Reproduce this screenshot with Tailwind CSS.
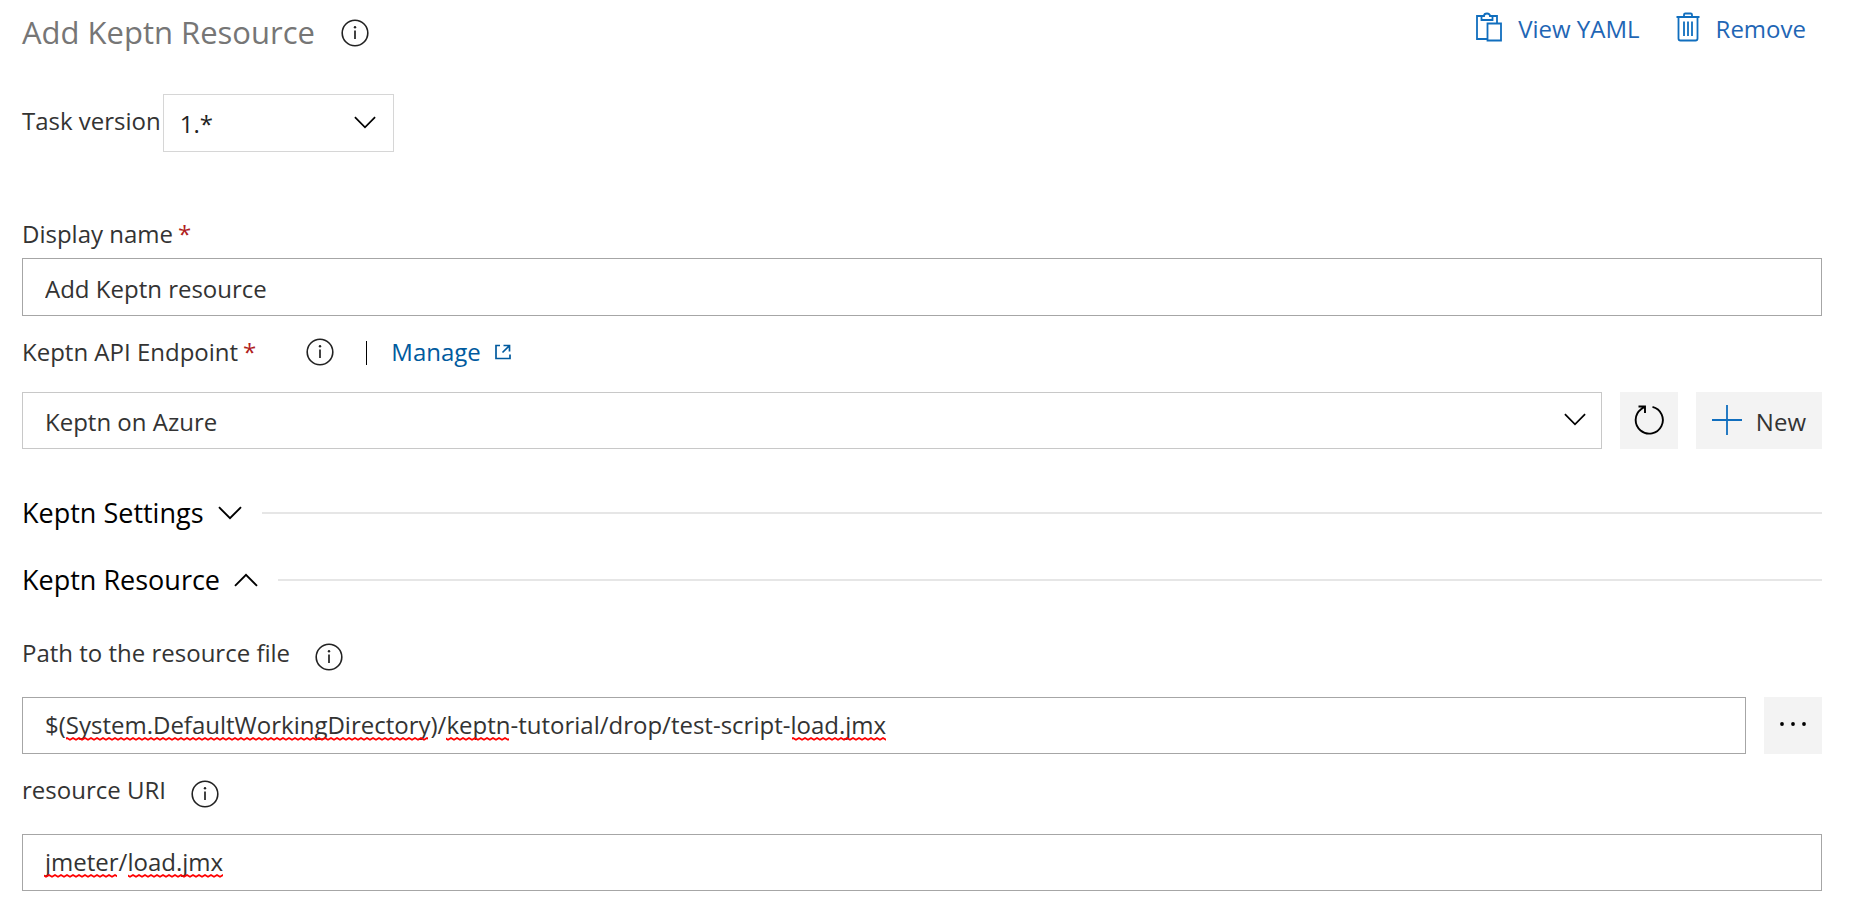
<!DOCTYPE html>
<html lang="en">
<head>
<meta charset="utf-8">
<meta name="viewport" content="width=device-width, initial-scale=1">
<title>Add Keptn Resource</title>
<script src="https://cdn.jsdelivr.net/npm/@tailwindcss/browser@4"></script>
</head>
<body class="bg-white font-['Segoe_UI','Open_Sans',sans-serif] text-2xl text-[#333333]">
<svg class="absolute size-0">
  <symbol id="info" viewBox="0 0 28 28"><circle cx="14" cy="14" r="12.8" fill="none" stroke="currentColor" stroke-width="1.6"/><path d="M14 11.5V20" stroke="currentColor" stroke-width="1.7"/><circle cx="14" cy="8.3" r="1.2" fill="currentColor"/></symbol>
  <symbol id="chevron" viewBox="0 0 24 14"><path d="M1 1.2 12 12.2 23 1.2" fill="none" stroke="currentColor" stroke-width="1.9"/></symbol>
  <pattern id="wave" width="6" height="4" patternUnits="userSpaceOnUse"><path d="M-3 1 L0 2.800 L3 1 L6 2.800 L9 1" fill="none" stroke="#ff0000" stroke-width="1.800" stroke-linejoin="round"/></pattern>
</svg>
<main class="flex flex-col pl-[22px] pr-7">
  <header class="flex h-[66px] items-center justify-between">
    <div class="flex items-center gap-[26px]">
      <h1 class="text-[31px] text-[#767676]">Add Keptn Resource</h1>
      <button type="button" aria-label="About this task" class="text-[#222222]"><svg class="size-7"><use href="#info"/></svg></button>
    </div>
    <div class="flex items-center gap-9 pr-4 pb-2 text-[#1f66b5]">
      <button type="button" class="flex items-center gap-4">
        <svg class="mb-1 h-[30px] w-[26px]" viewBox="1 0 26 30" fill="none" stroke="#106ebe" stroke-width="1.8"><path d="M12 27H2V4H7M18 4H22V11M6.500 4V8H17.500V4H15Q15 1.500 12 1.500T9 4ZM12.500 11.500H26V28.500H12.500Z"/></svg>
        <span>View YAML</span>
      </button>
      <button type="button" class="flex items-center gap-4">
        <svg class="mb-1 h-[30px] w-6" viewBox="0 0 24 30" fill="none" stroke="#106ebe" stroke-width="1.8"><path d="M0.500 5H23.500M8 5V2.800Q8 1.500 9.300 1.500H14.700Q16 1.500 16 2.800V5M2.500 5V26.500Q2.500 28.500 4.500 28.500H19.500Q21.500 28.500 21.500 26.500V5M8 9.500V24M12 9.500V24M16 9.500V24"/></svg>
        <span>Remove</span>
      </button>
    </div>
  </header>

  <div class="mt-7 flex items-center gap-[2px]">
    <label for="version" class="pb-1">Task version</label>
    <div class="relative w-[231px]">
      <select id="version" class="h-[58px] w-full appearance-none border border-[#d6d6d6] bg-white pt-[2px] pl-4 text-[#222222]"><option>1.*</option></select>
      <svg class="pointer-events-none absolute top-[22px] right-[18px] h-[13px] w-[22px] text-black"><use href="#chevron"/></svg>
    </div>
  </div>

  <label for="name" class="mt-16 flex h-[42px] items-center gap-[5px] pb-[6px]">Display name <span class="text-[#b01e1e]">*</span></label>
  <input id="name" type="text" value="Add Keptn resource" class="h-[58px] w-full border border-[#a6a6a6] pt-[2px] pl-[22px]">

  <div class="flex h-[76px] items-center pb-1">
    <label for="endpoint" class="flex gap-[5px]">Keptn API Endpoint <span class="text-[#b01e1e]">*</span></label>
    <button type="button" aria-label="About Keptn API Endpoint" class="ml-[50px] text-[#222222]"><svg class="size-7"><use href="#info"/></svg></button>
    <span class="mt-[2px] ml-8 h-6 w-px bg-black"></span>
    <a href="#" class="ml-6 flex items-center gap-[14px] text-[#005a9e]">Manage
      <svg class="size-4" viewBox="0 0 16 16" fill="none" stroke="currentColor" stroke-width="1.7"><path d="M5 1.500H1V14.500H15V10.500M8.500 1.500H14.500V7.500M14.500 1.500 7.500 8.500"/></svg>
    </a>
  </div>
  <div class="flex gap-[18px]">
    <div class="relative flex-1">
      <select id="endpoint" class="h-[57px] w-full appearance-none border border-[#c8c8c8] bg-white pt-[2px] pl-[22px]"><option>Keptn on Azure</option></select>
      <svg class="pointer-events-none absolute top-[21px] right-4 h-[13px] w-[22px] text-black"><use href="#chevron"/></svg>
    </div>
    <button type="button" aria-label="Refresh" class="flex h-[57px] w-[58px] items-center justify-center bg-[#f3f3f3] pb-[2px] text-black">
      <svg class="size-[30px]" viewBox="0 0 30 30" fill="none" stroke="currentColor" stroke-width="1.9"><path d="M18.500 1.800A13.600 13.600 0 1 1 7 4.200L11 1.500M4.500 1.500H11V8"/></svg>
    </button>
    <button type="button" class="flex h-[57px] items-center gap-[14px] bg-[#f3f3f3] px-4">
      <svg class="mb-[2px] size-[30px]" viewBox="0 0 30 30" stroke="#106ebe" stroke-width="1.8"><path d="M0 15H30M15 0V30"/></svg>
      <span class="pt-[2px]">New</span>
    </button>
  </div>

  <button type="button" aria-expanded="false" class="mt-[30px] flex h-[67px] items-center gap-[14px] text-[27px] text-black">
    <span>Keptn Settings</span>
    <svg class="h-[14px] w-6"><use href="#chevron"/></svg>
    <span class="ml-[6px] h-[2px] flex-1 bg-[#e6e6e6]"></span>
  </button>
  <button type="button" aria-expanded="true" class="flex h-[67px] items-center gap-[14px] text-[27px] text-black">
    <span>Keptn Resource</span>
    <svg class="h-[14px] w-6 rotate-180"><use href="#chevron"/></svg>
    <span class="ml-[6px] h-[2px] flex-1 bg-[#e6e6e6]"></span>
  </button>

  <div class="flex h-[84px] items-center gap-[25px]">
    <label for="path" class="pb-1">Path to the resource file</label>
    <button type="button" aria-label="About the resource file path" class="pt-1 text-[#222222]"><svg class="size-7"><use href="#info"/></svg></button>
  </div>
  <div class="flex gap-[18px]">
    <div class="relative flex-1">
      <input id="path" type="text" spellcheck="false" value="$(System.DefaultWorkingDirectory)/keptn-tutorial/drop/test-script-load.jmx" class="h-[57px] w-full border border-[#a6a6a6] pb-[2px] pl-[22px]">
      <svg class="pointer-events-none absolute top-10 left-0 h-1 w-full"><rect x="44" width="362" height="4" fill="url(#wave)"/><rect x="424" width="63" height="4" fill="url(#wave)"/><rect x="770" width="94" height="4" fill="url(#wave)"/></svg>
    </div>
    <button type="button" aria-label="Browse" class="flex h-[57px] w-[58px] items-center justify-center bg-[#f3f3f3] pb-1">
      <svg class="h-1 w-7" viewBox="0 0 28 4"><circle cx="3" cy="2" r="1.900"/><circle cx="14" cy="2" r="1.900"/><circle cx="25" cy="2" r="1.900"/></svg>
    </button>
  </div>

  <div class="flex h-[80px] items-center gap-[25px]">
    <label for="uri" class="pb-2">resource URI</label>
    <button type="button" aria-label="About the resource URI" class="text-[#222222]"><svg class="size-7"><use href="#info"/></svg></button>
  </div>
  <div class="relative">
    <input id="uri" type="text" spellcheck="false" value="jmeter/load.jmx" class="h-[57px] w-full border border-[#a6a6a6] pb-[2px] pl-[22px]">
    <svg class="pointer-events-none absolute top-10 left-0 h-1 w-full"><rect x="22" width="73" height="4" fill="url(#wave)"/><rect x="106" width="95" height="4" fill="url(#wave)"/></svg>
  </div>
</main>
</body>
</html>
